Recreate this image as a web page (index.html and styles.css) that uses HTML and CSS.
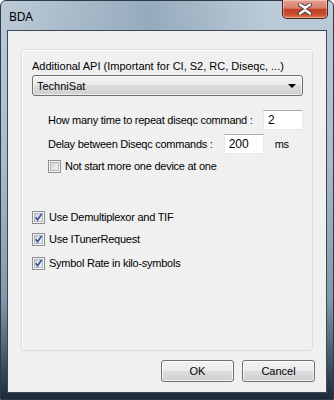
FILE: index.html
```html
<!DOCTYPE html>
<html lang="en">
<head>
    <meta charset="UTF-8">
    <title>BDA</title>
    <link rel="stylesheet" href="styles.css">
</head>
<body>
    <svg class="defs" width="0" height="0">
        <defs>
            <linearGradient id="boxfill" x1="0" y1="0" x2="1" y2="1">
                <stop offset="0" stop-color="#cbcfd5"/>
                <stop offset="1" stop-color="#f7f7f7"/>
            </linearGradient>
        </defs>
    </svg>

    <div class="window">
        <div class="titlebar">
            <span class="title">BDA</span>
            <div class="close">
                <svg width="16" height="12" viewBox="0 0 16 12">
                    <path d="M3 1.5 L8 5 L13 1.5 M3 10.5 L8 7 L13 10.5" stroke="#3b3b3b" stroke-width="4.2" fill="none" stroke-linecap="round"/>
                    <path d="M3 1.5 L8 5 L13 1.5 M3 10.5 L8 7 L13 10.5" stroke="#ffffff" stroke-width="2.4" fill="none" stroke-linecap="round"/>
                </svg>
            </div>
        </div>

        <div class="client">
            <div class="panel">
                <div class="label">Additional API (Important for CI, S2, RC, Diseqc, ...)</div>
                <div class="combo">
                    <span>TechniSat</span>
                    <span class="arrow"></span>
                </div>

                <div class="sub">
                    <div class="row">
                        <span class="row-text">How many time to repeat diseqc command :</span>
                        <span class="edit edit-repeat">2</span>
                    </div>
                    <div class="row">
                        <span class="row-text">Delay between Diseqc commands :</span>
                        <span class="edit edit-delay">200</span>
                        <span class="unit">ms</span>
                    </div>
                    <label class="check">
                        <svg width="13" height="13" viewBox="0 0 13 13">
                            <rect x="0.5" y="0.5" width="12" height="12" fill="#f4f4f4" stroke="#8e8f8f"/>
                            <rect x="2.5" y="2.5" width="8" height="8" fill="url(#boxfill)" stroke="#b3b7bd"/>
                        </svg>
                        <span>Not start more one device at one</span>
                    </label>
                </div>

                <div class="options">
                    <label class="check">
                        <svg width="13" height="13" viewBox="0 0 13 13">
                            <rect x="0.5" y="0.5" width="12" height="12" fill="#f4f4f4" stroke="#8e8f8f"/>
                            <rect x="2.5" y="2.5" width="8" height="8" fill="url(#boxfill)" stroke="#b3b7bd"/>
                            <path d="M3.6 6.2 L5.6 8.8 L9.6 3" stroke="#3c58a0" stroke-width="1.7" fill="none"/>
                        </svg>
                        <span>Use Demultiplexor and TIF</span>
                    </label>
                    <label class="check">
                        <svg width="13" height="13" viewBox="0 0 13 13">
                            <rect x="0.5" y="0.5" width="12" height="12" fill="#f4f4f4" stroke="#8e8f8f"/>
                            <rect x="2.5" y="2.5" width="8" height="8" fill="url(#boxfill)" stroke="#b3b7bd"/>
                            <path d="M3.6 6.2 L5.6 8.8 L9.6 3" stroke="#3c58a0" stroke-width="1.7" fill="none"/>
                        </svg>
                        <span>Use ITunerRequest</span>
                    </label>
                    <label class="check check-last">
                        <svg width="13" height="13" viewBox="0 0 13 13">
                            <rect x="0.5" y="0.5" width="12" height="12" fill="#f4f4f4" stroke="#8e8f8f"/>
                            <rect x="2.5" y="2.5" width="8" height="8" fill="url(#boxfill)" stroke="#b3b7bd"/>
                            <path d="M3.6 6.2 L5.6 8.8 L9.6 3" stroke="#3c58a0" stroke-width="1.7" fill="none"/>
                        </svg>
                        <span>Symbol Rate in kilo-symbols</span>
                    </label>
                </div>
            </div>

            <div class="buttons">
                <button class="btn">OK</button>
                <button class="btn">Cancel</button>
            </div>
        </div>
    </div>
</body>
</html>
```

FILE: styles.css
```css
/* Page */
body {
    margin: 0;
    font-family: "Liberation Sans", Arial, sans-serif;
    font-size: 11px;
    color: #000;
}

.defs {
    position: absolute;
}

/* Window frame (Aero glass) */
.window {
    width: 334px;
    height: 400px;
    box-sizing: border-box;
    border: 1px solid #2e3a46;
    border-radius: 6px 6px 0 0;
    padding: 0 6px 6px 6px;
    background:
        linear-gradient(90deg, rgba(185, 201, 214, 0) 0%, rgba(140, 163, 182, 0.8) 45%, rgba(185, 201, 214, 0) 80%) top / 100% 30px no-repeat,
        linear-gradient(180deg, #bccbd8 0%, #a9bccb 40%, #8199ac 75%, #3a4e61 92%, #1d2b39 100%);
    display: flex;
    flex-direction: column;
}

.titlebar {
    height: 29px;
    display: flex;
    align-items: flex-start;
    justify-content: space-between;
}

.title {
    font-family: "Noto Sans", "Open Sans", sans-serif;
    font-size: 12px;
    color: #000;
    margin: 7px 0 0 2px;
}

.close {
    width: 46px;
    height: 19px;
    box-sizing: border-box;
    margin-right: -1px;
    margin-top: -1px;
    border: 1px solid #4a2620;
    border-top: none;
    border-radius: 0 0 5px 5px;
    background: linear-gradient(180deg, #e6a091 0%, #d8806d 45%, #c2402a 52%, #c94c2e 80%, #e07a50 100%);
    box-shadow: inset 0 0 0 1px rgba(255, 255, 255, 0.35);
    display: flex;
    align-items: center;
    justify-content: center;
}

/* Client area */
.client {
    flex: 1;
    border: 1px solid #3b4856;
    background-color: #f0f0f0;
    display: flex;
    flex-direction: column;
}

.panel {
    margin: 18px 13px 0 13px;
    height: 302px;
    box-sizing: border-box;
    border: 1px solid #d5dfe5;
    border-radius: 3px;
    box-shadow: inset 1px 1px 0 #fff;
    padding: 9px 9px 0 10px;
}

.label {
    line-height: 14px;
}

.combo {
    margin-top: 2px;
    height: 21px;
    box-sizing: border-box;
    border: 1px solid #707070;
    border-radius: 3px;
    background: linear-gradient(180deg, #f2f2f2 0%, #ebebeb 50%, #dddddd 50%, #cfcfcf 100%);
    box-shadow: inset 0 0 0 1px rgba(255, 255, 255, 0.6);
    display: flex;
    align-items: center;
    justify-content: space-between;
    padding: 0 6px 0 4px;
}

.arrow {
    width: 0;
    height: 0;
    border-left: 4px solid transparent;
    border-right: 4px solid transparent;
    border-top: 4px solid #000;
}

/* Diseqc settings */
.sub {
    padding: 14px 0 0 16px;
    letter-spacing: -0.25px;
}

.row {
    display: flex;
    align-items: center;
    margin-bottom: 4px;
}

.edit {
    height: 20px;
    box-sizing: border-box;
    border: 1px solid #e3e9ef;
    border-top-color: #abadb3;
    background-color: #fff;
    padding: 3px 0 0 4px;
    line-height: 13px;
    font-size: 12px;
    letter-spacing: 0;
}

.edit-repeat {
    width: 40px;
    margin-left: auto;
}

.edit-delay {
    width: 40px;
    margin-left: 11px;
}

.unit {
    margin-left: 11px;
}

.check {
    display: flex;
    align-items: center;
    gap: 4px;
    height: 16px;
}

.check svg {
    flex: none;
}

.options {
    margin-top: 35px;
    display: flex;
    flex-direction: column;
    gap: 6px;
    letter-spacing: -0.25px;
}

.check-last {
    margin-top: 2px;
}

/* Dialog buttons */
.buttons {
    display: flex;
    justify-content: flex-end;
    gap: 8px;
    margin: 9px 11px 0 0;
}

.btn {
    width: 73px;
    height: 22px;
    font-family: "Liberation Sans", Arial, sans-serif;
    font-size: 11px;
    color: #000;
    border: 1px solid #707070;
    border-radius: 3px;
    background: linear-gradient(180deg, #f2f2f2 0%, #ebebeb 50%, #dddddd 50%, #cfcfcf 100%);
    box-shadow: inset 0 0 0 1px rgba(255, 255, 255, 0.7);
    padding: 0;
}
```
